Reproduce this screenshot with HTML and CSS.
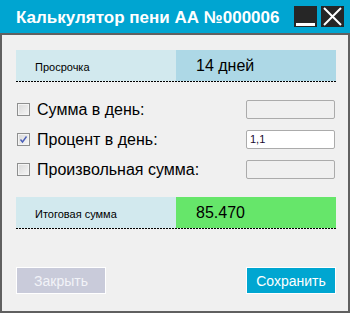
FILE: index.html
```html
<!DOCTYPE html>
<html lang="ru">
<head>
<meta charset="utf-8">
<link rel="stylesheet" href="styles.css">
</head>
<body>
<div class="window">
  <header class="titlebar">
    <span class="title">Калькулятор пени АА №000006</span>
    <div class="controls">
      <span class="ctl min"><span class="bar"></span></span>
      <span class="ctl close">
        <svg width="23" height="21" viewBox="0 0 23 21"><path d="M3 2 L20 19 M20 2 L3 19" stroke="#fff" stroke-width="2" fill="none"/></svg>
      </span>
    </div>
  </header>
  <main class="content">
    <div class="panel">
      <div class="panel-label">Просрочка</div>
      <div class="panel-value blue">14 дней</div>
    </div>
    <div class="rows">
      <div class="row">
        <span class="cb"></span>
        <span class="lbl">Сумма в день:</span>
        <span class="field disabled"></span>
      </div>
      <div class="row">
        <span class="cb checked">
          <svg width="9" height="9" viewBox="0 0 9 9"><path d="M1.5 4.5 L3.5 7 L7.5 1.5" stroke="#4a5fb8" stroke-width="1.4" fill="none"/></svg>
        </span>
        <span class="lbl">Процент в день:</span>
        <span class="field">1,1</span>
      </div>
      <div class="row">
        <span class="cb"></span>
        <span class="lbl">Произвольная сумма:</span>
        <span class="field disabled"></span>
      </div>
    </div>
    <div class="panel total">
      <div class="panel-label">Итоговая сумма</div>
      <div class="panel-value green">85.470</div>
    </div>
    <div class="actions">
      <button class="btn muted">Закрыть</button>
      <button class="btn primary">Сохранить</button>
    </div>
  </main>
</div>
</body>
</html>
```

FILE: styles.css
```css
* { box-sizing: border-box; }
html, body { margin: 0; padding: 0; }
body {
  font-family: "Liberation Sans", Arial, sans-serif;
  background: #f0f0f0;
}
.window {
  width: 350px;
  height: 313px;
  display: flex;
  flex-direction: column;
}
.titlebar {
  height: 33px;
  background: #00a5d1;
  display: flex;
  align-items: flex-start;
  justify-content: space-between;
  padding-left: 16px;
  padding-right: 6px;
}
.title {
  color: #fff;
  font-weight: bold;
  font-size: 17px;
  line-height: 20px;
  margin-top: 8px;
}
.controls {
  display: flex;
  gap: 4px;
  margin-top: 6px;
}
.ctl {
  display: block;
  height: 21px;
  background: #262626;
  position: relative;
}
.ctl.min { width: 23px; }
.ctl.close { width: 23px; }
.ctl .bar {
  position: absolute;
  left: 2px;
  right: 2px;
  top: 17px;
  height: 3px;
  background: #fff;
}
.ctl svg { display: block; }
.content {
  flex: 1;
  border: 2px solid #606060;
  padding: 15px 12px 0 14px;
  display: flex;
  flex-direction: column;
}
.panel {
  display: grid;
  grid-template-columns: 160px 160px;
  height: 32px;
  padding-bottom: 1px;
  background: repeating-linear-gradient(90deg, #000 0 2px, transparent 2px 3px) left bottom / 100% 1px no-repeat;
}
.panel-label {
  background: #d2e9ee;
  font-size: 11px;
  color: #000;
  padding-left: 19px;
  display: flex;
  align-items: center;
  padding-top: 3px;
}
.panel-value {
  font-size: 16px;
  color: #000;
  padding-left: 20px;
  display: flex;
  align-items: center;
}
.panel-value.blue { background: #add8e6; }
.panel-value.green { background: #66e66a; padding-top: 1px; }
.rows {
  margin-top: 18px;
  display: flex;
  flex-direction: column;
  gap: 11px;
}
.row {
  height: 19px;
  display: flex;
  align-items: center;
}
.cb {
  width: 13px;
  height: 13px;
  margin-left: 1px;
  border: 1px solid #8e8f8f;
  background: linear-gradient(135deg, #d8d8d8, #f7f7f7);
  box-shadow: inset 0 0 0 1px #f4f4f4;
  display: flex;
  align-items: center;
  justify-content: center;
}
.cb svg { display: block; }
.lbl {
  margin-left: 7px;
  font-size: 16px;
  line-height: 19px;
  color: #000;
}
.field {
  margin-left: auto;
  margin-right: 1px;
  width: 89px;
  height: 19px;
  border: 1px solid #ababab;
  border-radius: 2px;
  background: #fff;
  font-size: 11px;
  line-height: 17px;
  padding-left: 3px;
  color: #1a0a30;
}
.field.disabled { background: #f0f0f0; }
.total { margin-top: 18px; }
.actions {
  margin-top: 38px;
  display: flex;
  justify-content: space-between;
}
.btn {
  width: 90px;
  height: 27px;
  border: 1px solid #fff;
  font-family: "Liberation Sans", Arial, sans-serif;
  font-size: 14px;
  color: #fff;
  padding: 0;
}
.btn.muted { background: #c9cbda; color: #f2f3f8; }
.btn.primary { background: #00a6d1; }
```
